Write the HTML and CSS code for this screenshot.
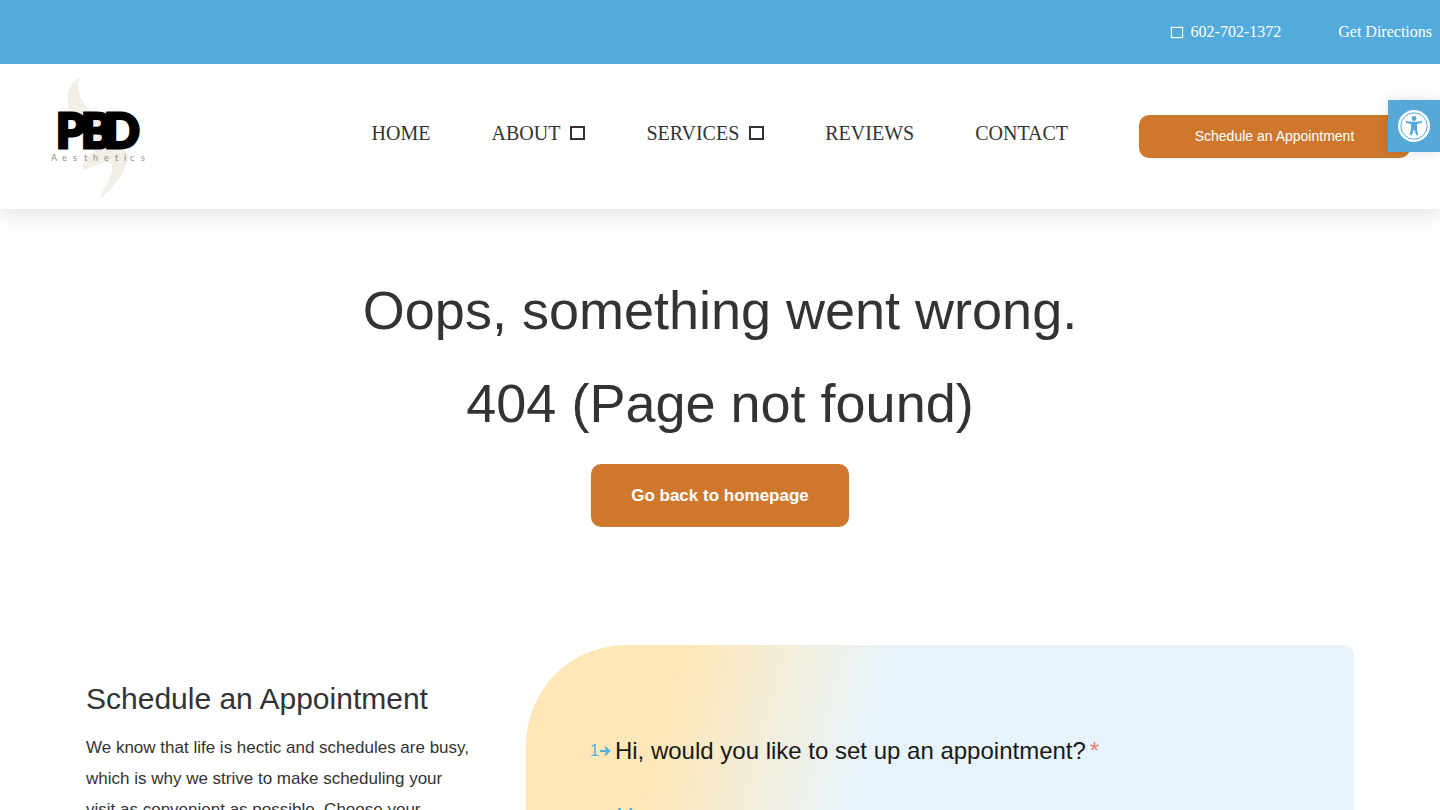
FILE: index.html
```html
<!DOCTYPE html>
<html lang="en">
<head>
<meta charset="utf-8">
<meta name="viewport" content="width=device-width, initial-scale=1">
<title>Page not found | PBD Aesthetics</title>
<link rel="stylesheet" href="styles.css">
</head>
<body>
<div class="topbar">
  <a class="phone" href="#"><span class="box box-small"></span>602-702-1372</a>
  <a href="#">Get Directions</a>
</div>
<header class="header">
  <a class="logo" href="#" aria-label="PBD Aesthetics home">
    <svg class="logo-mark" viewBox="0 0 100 124" aria-hidden="true">
      <path fill="#f3efe8" d="M30 2C20 7 16 18 18 29C20 45 31 56 46 74C41 80 31 86 33 95C44 93 57 83 61 89C66 96 54 112 49 124C62 116 75 100 79 80C66 61 49 45 36 31C29 22 26 11 30 2Z"/>
      <text class="logo-name" x="6 31 54" y="73">PBD</text>
      <text class="logo-sub" x="1 12 23 34 43 54 65 74 80 91" y="86">Aesthetics</text>
    </svg>
  </a>
  <nav class="nav" aria-label="Main">
    <a href="#">HOME</a>
    <a href="#">ABOUT<span class="box"></span></a>
    <a href="#">SERVICES<span class="box"></span></a>
    <a href="#">REVIEWS</a>
    <a href="#">CONTACT</a>
  </nav>
  <a class="cta" href="#">Schedule an Appointment</a>
</header>
<button class="access" type="button" aria-label="Accessibility tools">
  <svg viewBox="0 0 32 32" width="32" height="32" aria-hidden="true">
    <circle cx="16" cy="16" r="16" fill="#fff"/>
    <circle cx="16" cy="16" r="13.200" fill="none" stroke="#55a9d9" stroke-width="1"/>
    <circle cx="16" cy="8.500" r="2.400" fill="#55a9d9"/>
    <path fill="#55a9d9" d="M8 11L13.500 11.800H18.500L24 11L24.200 12.700L19 14V18.500L20.300 25L18.300 25.400L16.300 19.800H15.700L13.700 25.400L11.700 25L13 18.500V14L7.800 12.700Z"/>
  </svg>
</button>
<main>
  <section class="error">
    <h1 class="title">Oops, something went wrong.</h1>
    <p class="title">404 (Page not found)</p>
    <a class="home" href="#">Go back to homepage</a>
  </section>
  <section class="schedule">
    <div class="intro">
      <h2>Schedule an Appointment</h2>
      <p>We know that life is hectic and schedules are busy, which is why we strive to make scheduling your visit as convenient as possible. Choose your</p>
    </div>
    <form class="form">
      <label class="question" for="answer">
        <span class="number">1<svg viewBox="0 0 11 10" width="11" height="10" aria-hidden="true"><path d="M0 5H9M5 1L9 5L5 9" fill="none" stroke="#4fb0dd" stroke-width="2.200"/></svg></span>
        <span class="question-text">Hi, would you like to set up an appointment?</span>
        <span class="required">*</span>
      </label>
      <input class="answer" id="answer" type="text" placeholder="Yes">
    </form>
  </section>
</main>
</body>
</html>
```
FILE: styles.css
```css
* { box-sizing: border-box; }
html { height: 100%; }
body {
  display: flex;
  flex-direction: column;
  height: 100%;
  margin: 0;
  overflow: hidden;
  background: #fff;
  color: #333;
  font-family: "Liberation Sans", Arial, sans-serif;
}
a { color: inherit; text-decoration: none; }
.topbar {
  flex: none;
  display: flex;
  align-items: center;
  justify-content: flex-end;
  gap: 57px;
  height: 64px;
  padding: 0 8px;
  background: #52abda;
  color: #fff;
  font: 16px/24px "Liberation Serif", "Times New Roman", serif;
}
.phone { display: flex; align-items: center; gap: 8px; }
.box {
  display: inline-block;
  width: 15px;
  height: 14px;
  border: 2px solid currentColor;
}
.box-small {
  width: 12px;
  height: 11px;
  border-width: 1px;
  box-shadow: 0 0 1px #fff;
}
.header {
  flex: none;
  display: flex;
  align-items: center;
  height: 145px;
  padding: 0 30px 0 50px;
  box-shadow: 0 0 25px rgba(0, 0, 0, 0.18);
  clip-path: inset(0 0 -50px 0);
}
.logo { width: 100px; }
.logo-mark { display: block; width: 100px; height: 124px; }
.logo-name {
  fill: #000;
  stroke: #000;
  stroke-width: 3px;
  font: 900 47px Lato, sans-serif;
}
.logo-sub {
  fill: #8f897f;
  font: 9px Lato, sans-serif;
}
.nav {
  flex: 1;
  display: flex;
  justify-content: flex-end;
  gap: 61px;
  margin-right: 71px;
  padding-bottom: 8px;
  font: 20px/28px "Liberation Serif", "Times New Roman", serif;
}
.nav a { display: flex; align-items: center; gap: 10px; }
.cta {
  width: 271px;
  border-radius: 10px;
  background: #cf782d;
  color: #fff;
  font-size: 14px;
  line-height: 43px;
  text-align: center;
}
.access {
  position: absolute;
  top: 100px;
  right: 0;
  display: grid;
  place-items: center;
  width: 52px;
  height: 52px;
  padding: 0;
  border: 0;
  background: #55a9d9;
  box-shadow: 0 0 12px rgba(0, 0, 0, 0.12);
}
.error {
  display: flex;
  flex-direction: column;
  align-items: center;
  padding: 55px 20px 0;
}
.title {
  margin: 0;
  font-size: 54px;
  font-weight: 400;
  line-height: 93px;
  text-align: center;
}
.home {
  margin-top: 14px;
  padding: 0 40px;
  border-radius: 10px;
  background: #cf782d;
  color: #fff;
  font-size: 17px;
  font-weight: 700;
  line-height: 63px;
}
.schedule {
  display: grid;
  grid-template-columns: 388px 1fr;
  gap: 52px;
  margin-top: 118px;
  padding: 0 86px;
}
.intro { padding-top: 32px; }
.intro h2 {
  margin: 0;
  font-size: 30px;
  font-weight: 400;
  line-height: 44px;
}
.intro p {
  margin: 11px 0 0;
  font-size: 17px;
  line-height: 31px;
}
.form {
  min-height: 500px;
  padding: 90px 64px;
  border-radius: 100px 10px 10px 10px;
  background: linear-gradient(105deg, #ffe7b8 17%, #e8f4fb 38%);
}
.question {
  display: flex;
  align-items: center;
  gap: 4px;
  color: #191919;
  font-size: 24px;
  line-height: 32px;
}
.number {
  display: flex;
  align-items: center;
  gap: 1px;
  color: #4fb0dd;
  font-size: 16px;
}
.required { color: #f47b72; }
.answer {
  display: block;
  width: 100%;
  margin-top: 34px;
  padding: 0 0 0 27px;
  border: 0;
  background: none;
  color: #4fb0dd;
  font: 24px/32px "Liberation Sans", Arial, sans-serif;
}
.answer::placeholder { color: #4fb0dd; }
```
